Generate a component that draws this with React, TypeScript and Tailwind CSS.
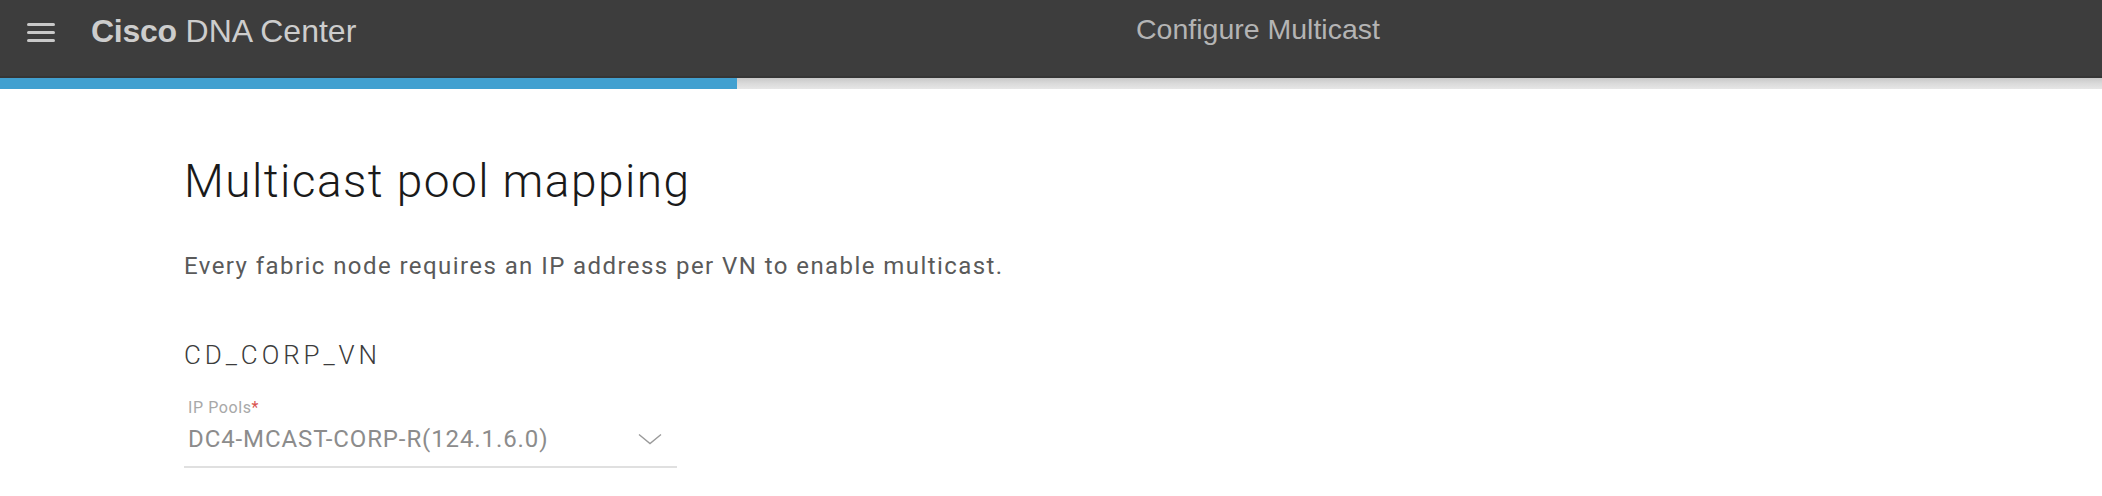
import React from "react";

function Hamburger() {
	return (
		<div className="flex w-[28px] flex-col gap-[5px]">
			<span className="h-[3px] w-full rounded-sm bg-[#c9c9c9]" />
			<span className="h-[3px] w-full rounded-sm bg-[#c9c9c9]" />
			<span className="h-[3px] w-full rounded-sm bg-[#c9c9c9]" />
		</div>
	);
}

function Chevron() {
	return (
		<svg width="24" height="12" viewBox="0 0 24 12" fill="none" className="text-[#9a9a9a]">
			<path d="M1 1.5 L12 10.5 L23 1.5" stroke="currentColor" strokeWidth="1.4" />
		</svg>
	);
}

export default function App() {
	return (
		<div className="min-h-[496px] w-full bg-white font-['Roboto',sans-serif]">
			{/* top bar */}
			<header className="flex h-[78px] bg-[#3d3d3d] shadow-[inset_0_-2px_0_#363636] font-['Liberation_Sans',Arial,sans-serif]">
				<div className="flex w-[1136px] shrink-0 items-start">
					<div className="ml-[27px] mt-[23px]">
						<Hamburger />
					</div>
					<div className="ml-[36px] pt-[13px] text-[32px] leading-[37px] text-[#cdcdcd]">
						<span className="font-bold tracking-[-0.3px]">Cisco</span> DNA Center
					</div>
				</div>
				<div className="pt-[12px] text-[28.5px] leading-[34px] text-[#b4b4b4]">Configure Multicast</div>
			</header>

			{/* wizard progress */}
			<div className="flex h-[11px] bg-gradient-to-b from-[#c9c9c9] via-[#dadada] to-[#e6e6e6]">
				<div className="w-[737px] bg-[#41a0d0]" />
			</div>

			<main className="pl-[184px] pt-[65px]">
				<h1 className="text-[46px] font-light leading-[55px] tracking-[1.45px] text-[#1a1a1a]">Multicast pool mapping</h1>
				<p className="mt-[43px] text-[24px] leading-[28px] tracking-[1.43px] text-[#5a5a5a]">
					Every fabric node requires an IP address per VN to enable multicast.
				</p>

				<h2 className="mt-[60px] text-[26px] font-light leading-[31px] tracking-[3.9px] text-[#3c3c3c]">CD_CORP_VN</h2>

				<div className="mt-[27px] w-[493px]">
					<label className="block pl-[4px] text-[16px] leading-[20px] tracking-[0.6px] text-[#a8a8a8]">
						IP Pools<span className="text-[#d9534f]">*</span>
					</label>
					<div className="mt-[7px] flex items-center justify-between border-b-2 border-[#e0e0e0] pb-[13px] pl-[4px] pr-[15px]">
						<span className="text-[24px] leading-[28px] tracking-[0.9px] text-[#8c8c8c]">DC4-MCAST-CORP-R(124.1.6.0)</span>
						<Chevron />
					</div>
				</div>
			</main>
		</div>
	);
}
